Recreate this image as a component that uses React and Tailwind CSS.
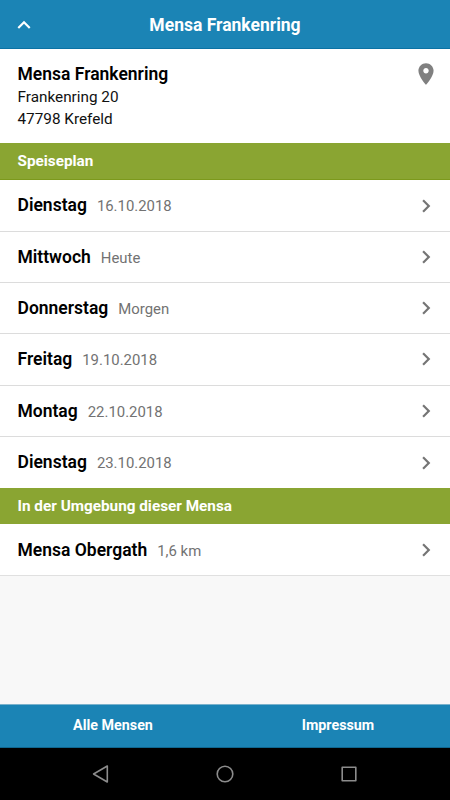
import React from 'react';

const days = [
  { name: 'Dienstag', info: '16.10.2018' },
  { name: 'Mittwoch', info: 'Heute' },
  { name: 'Donnerstag', info: 'Morgen' },
  { name: 'Freitag', info: '19.10.2018' },
  { name: 'Montag', info: '22.10.2018' },
  { name: 'Dienstag', info: '23.10.2018' },
];

const nearby = [{ name: 'Mensa Obergath', info: '1,6 km' }];

function SectionHeader({ title }) {
  return (
    <h2 className="h-[37px] px-[17.5px] pt-px text-[15.3px] leading-[35px] font-bold text-white bg-[#8aa532] border-b border-[#7c991c]">
      {title}
    </h2>
  );
}

function ListRow({ name, info }) {
  return (
    <li className="flex items-center h-[51.3px] pl-[17.5px] pr-[11px] bg-white border-b border-[#dcdcdc] last:border-b-0">
      <div className="flex items-baseline flex-1 gap-[10px]">
        <span className="text-[17.5px] font-semibold text-black">{name}</span>
        <span className="text-[14.9px] text-[#727272]">{info}</span>
      </div>
      <svg viewBox="0 0 24 24" className="w-[26px] h-[26px]" fill="#757575">
        <path d="M10 6L8.59 7.41 13.17 12l-4.58 4.59L10 18l6-6z" />
      </svg>
    </li>
  );
}

function App() {
  return (
    <div className="flex flex-col w-[450px] h-[800px] overflow-hidden bg-[#f8f8f8] font-['Roboto',sans-serif]">
      <header className="grid grid-cols-[48px_1fr_48px] items-center h-[49px] pt-[2px] shrink-0 bg-[#1b84b5] border-b border-[#0b72a4]">
        <button type="button" className="pl-[11px]" aria-label="Back">
          <svg viewBox="0 0 24 24" className="w-[26px] h-[26px]" fill="#ffffff">
            <path d="M12 8l-6 6 1.41 1.41L12 10.83l4.59 4.58L18 14z" />
          </svg>
        </button>
        <h1 className="text-center text-[17.5px] font-bold text-white">Mensa Frankenring</h1>
      </header>

      <main className="flex-1">
        <section className="flex justify-between h-[94.4px] pl-[17.5px] pr-[11px] pt-[14px] bg-white text-black">
          <address className="not-italic text-[15.3px] leading-[22px] text-[#111111]">
            <strong className="block text-[17.5px] leading-[23px] font-semibold text-black">Mensa Frankenring</strong>
            Frankenring 20
            <br />
            47798 Krefeld
          </address>
          <svg viewBox="0 0 24 24" className="w-[26px] h-[26px] -mt-[2px]" fill="#808080">
            <path d="M12 2C8.13 2 5 5.13 5 9c0 5.25 7 13 7 13s7-7.75 7-13c0-3.87-3.13-7-7-7zm0 9.5c-1.38 0-2.5-1.12-2.5-2.5s1.12-2.5 2.5-2.5 2.5 1.12 2.5 2.5-1.12 2.5-2.5 2.5z" />
          </svg>
        </section>

        <SectionHeader title="Speiseplan" />
        <ul>
          {days.map((day, index) => (
            <ListRow key={index} name={day.name} info={day.info} />
          ))}
        </ul>

        <SectionHeader title="In der Umgebung dieser Mensa" />
        <ul className="-mt-px border-b border-[#e0e0e0]">
          {nearby.map((mensa) => (
            <ListRow key={mensa.name} name={mensa.name} info={mensa.info} />
          ))}
        </ul>
      </main>

      <footer className="grid grid-cols-2 h-[43.5px] shrink-0 pb-px bg-[#1b84b5] border-t border-t-[#7ab2cc] border-b border-b-[#0f6790]">
        <button type="button" className="pl-px text-[14.3px] font-bold text-white">Alle Mensen</button>
        <button type="button" className="pl-px text-[14.3px] font-bold text-white">Impressum</button>
      </footer>

      <nav className="flex justify-center items-center gap-[100px] h-[52.5px] shrink-0 bg-black">
        <svg viewBox="0 0 24 24" className="w-6 h-6" fill="none" stroke="#8c8c8c" strokeWidth="1.6" strokeLinejoin="round">
          <path d="M18.3 4v16L4.6 12z" />
        </svg>
        <svg viewBox="0 0 24 24" className="w-6 h-6" fill="none" stroke="#8c8c8c" strokeWidth="1.6">
          <circle cx="12" cy="12" r="7.8" />
        </svg>
        <svg viewBox="0 0 24 24" className="w-6 h-6" fill="none" stroke="#8c8c8c" strokeWidth="1.6" strokeLinejoin="round">
          <path d="M5.2 5.2h13.6v13.6H5.2z" />
        </svg>
      </nav>
    </div>
  );
}

export default App;
